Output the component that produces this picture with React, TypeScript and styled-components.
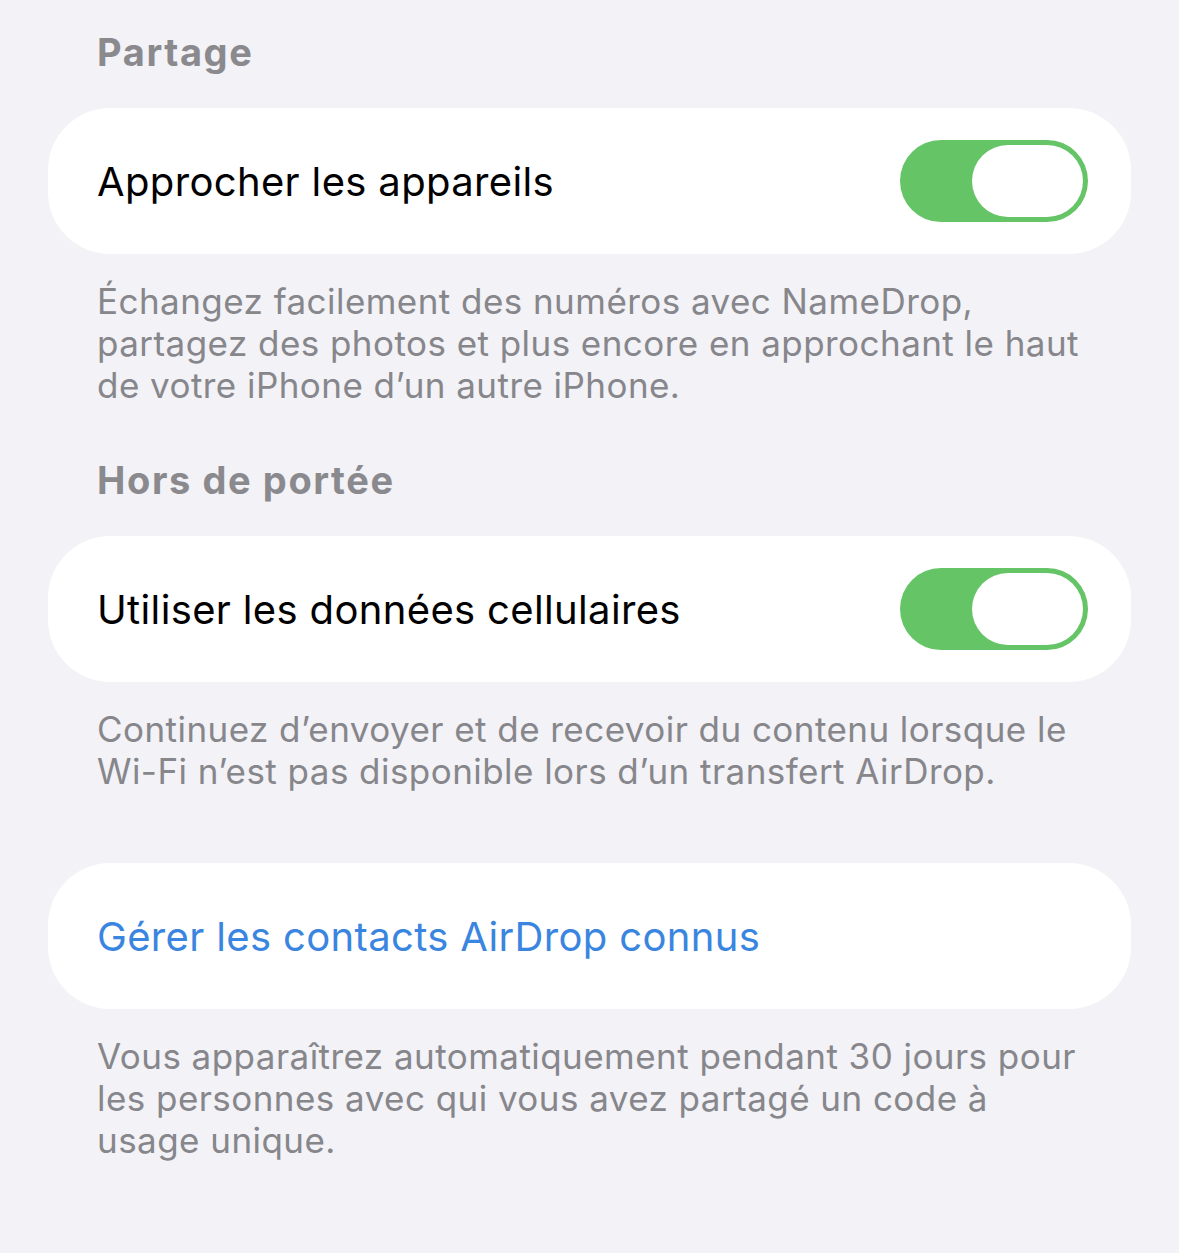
import { FC } from "react";
import styled, { createGlobalStyle } from "styled-components";

const GlobalStyle = createGlobalStyle`
    html, body {
        margin: 0;
        padding: 0;
        background-color: #F2F2F7;
    }
    body {
        font-family: Inter, "Noto Sans", "Liberation Sans", sans-serif;
        -webkit-font-smoothing: antialiased;
    }
`;

type ToggleProps = { on: boolean };

const Toggle: FC<ToggleProps> = ({ on }) => (
    <Track $on={on}>
        <Knob />
    </Track>
);

const App: FC = () => {
    return (
        <>
            <GlobalStyle />
            <Root>
                <SectionHeader>Partage</SectionHeader>
                <Card>
                    <Label>Approcher les appareils</Label>
                    <Toggle on />
                </Card>
                <Footer>
                    Échangez facilement des numéros avec NameDrop,
                    <br />
                    partagez des photos et plus encore en approchant le haut
                    <br />
                    de votre iPhone d’un autre iPhone.
                </Footer>

                <SectionHeader>Hors de portée</SectionHeader>
                <Card>
                    <Label>Utiliser les données cellulaires</Label>
                    <Toggle on />
                </Card>
                <Footer>
                    Continuez d’envoyer et de recevoir du contenu lorsque le
                    <br />
                    Wi-Fi n’est pas disponible lors d’un transfert AirDrop.
                </Footer>

                <Spacer />
                <Card>
                    <Label $link>Gérer les contacts AirDrop connus</Label>
                </Card>
                <Footer>
                    Vous apparaîtrez automatiquement pendant 30 jours pour
                    <br />
                    les personnes avec qui vous avez partagé un code à
                    <br />
                    usage unique.
                </Footer>
            </Root>
        </>
    );
};

export default App;

const Root = styled.div`
    box-sizing: border-box;
    width: 1179px;
    min-height: 1253px;
    padding: 30px 48px 60px 48px;
    display: flex;
    flex-direction: column;
    background-color: #F2F2F7;
`;

const SectionHeader = styled.div`
    padding: 0 49px;
    font-size: 38px;
    line-height: 44px;
    font-weight: 700;
    letter-spacing: 1.6px;
    color: #8A8A8E;
    margin-bottom: 34px;
`;

const Card = styled.div`
    box-sizing: border-box;
    height: 146px;
    padding: 0 43px 0 49px;
    border-radius: 62px;
    background-color: #FFFFFF;
    display: flex;
    flex-direction: row;
    align-items: center;
    justify-content: space-between;
`;

const Label = styled.div<{ $link?: boolean }>`
    font-size: 40px;
    font-weight: 400;
    letter-spacing: 0.35px;
    color: ${(p) => (p.$link ? "#3A85E0" : "#000000")};
`;

const Footer = styled.div`
    padding: 26px 49px 0 49px;
    font-size: 35px;
    line-height: 42px;
    letter-spacing: 0.45px;
    color: #86868B;
    margin-bottom: 52px;
`;

const Spacer = styled.div`
    height: 19px;
`;

const Track = styled.div<{ $on: boolean }>`
    box-sizing: border-box;
    width: 188px;
    height: 82px;
    padding: 5px 5px 5px 72px;
    border-radius: 41px;
    background-color: ${(p) => (p.$on ? "#65C466" : "#E9E9EB")};
    display: flex;
    align-items: stretch;
`;

const Knob = styled.div`
    flex: 1;
    border-radius: 36px;
    background-color: #FFFFFF;
`;
